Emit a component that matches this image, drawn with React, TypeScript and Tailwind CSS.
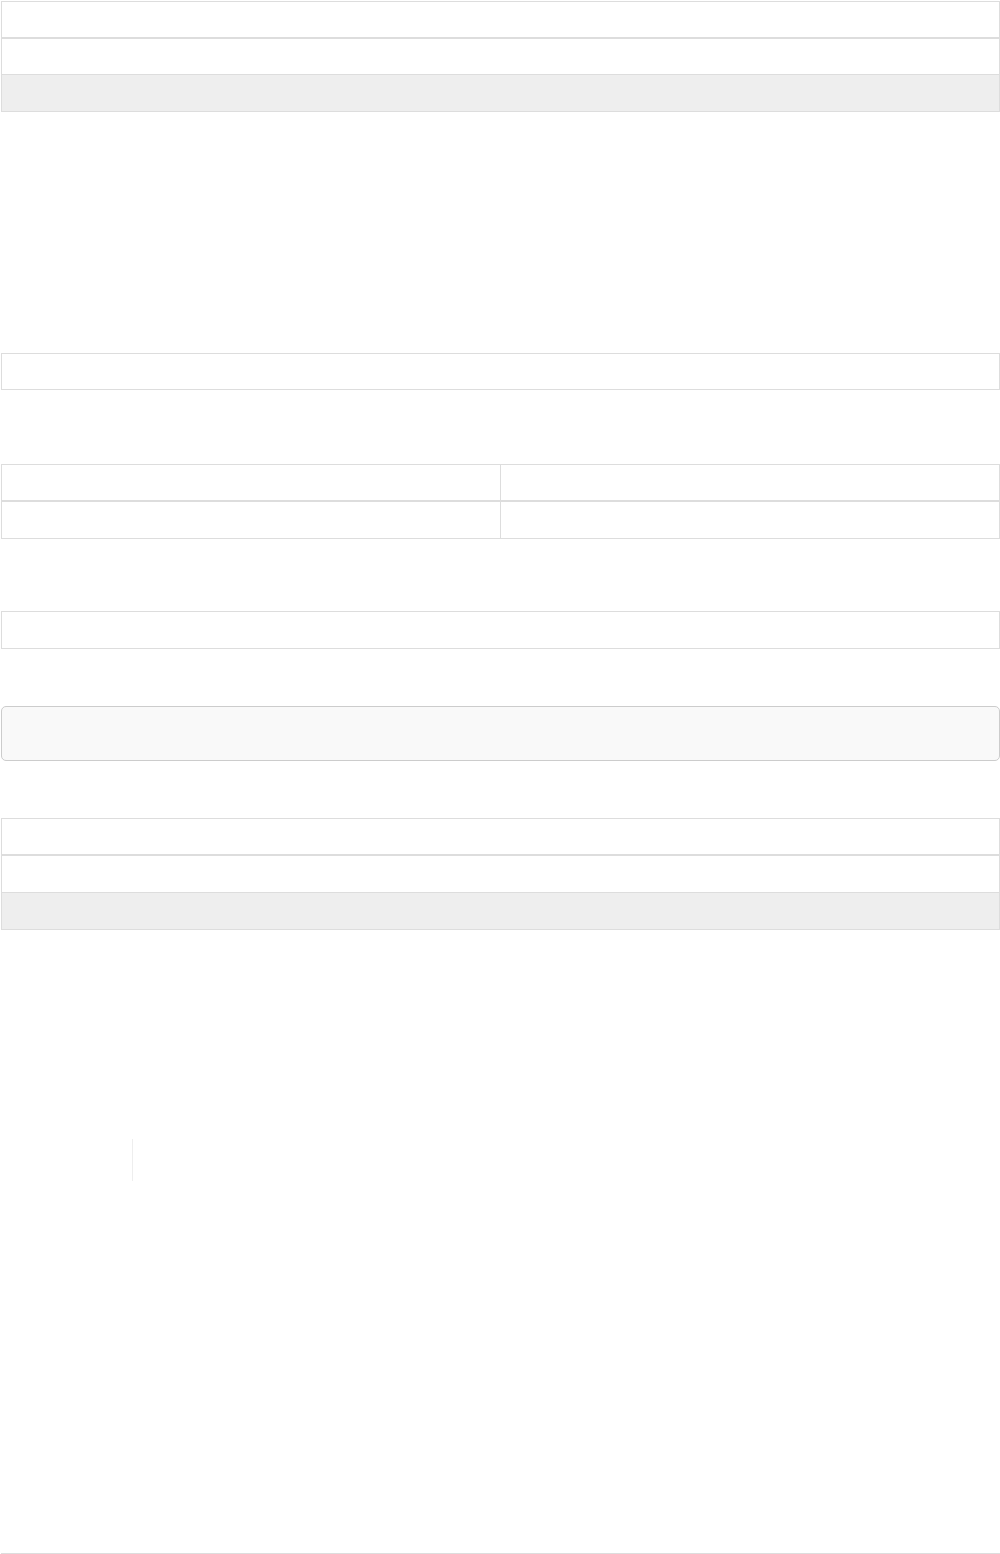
export default function App() {
  return (
    <div className="w-[1000px] h-[1554px] bg-white flex flex-col" style={{ fontFamily: '"Liberation Sans", Arial, sans-serif' }}>
      {/* Table 1 */}
      <div className="mt-[1px] ml-[1px] w-[999px] border border-[#dddddd] flex flex-col">
        <div className="h-[37px] border-b-2 border-[#dddddd]" />
        <div className="h-[36px] border-b border-[#dddddd]" />
        <div className="h-[36px] bg-[#eeeeee]" />
      </div>

      {/* Box 2 */}
      <div className="mt-[241px] ml-[1px] w-[999px] h-[37px] border border-[#dddddd]" />

      {/* Table 3 two columns */}
      <div className="mt-[74px] ml-[1px] w-[999px] border border-[#dddddd] flex flex-col">
        <div className="h-[37px] border-b-2 border-[#dddddd] grid grid-cols-[499px_1fr]">
          <div className="border-r border-[#dddddd]" />
          <div />
        </div>
        <div className="h-[36px] grid grid-cols-[499px_1fr]">
          <div className="border-r border-[#dddddd]" />
          <div />
        </div>
      </div>

      {/* Box 4 */}
      <div className="mt-[72px] ml-[1px] w-[999px] h-[38px] border border-[#dddddd]" />

      {/* Box 5 rounded */}
      <div className="mt-[57px] ml-[1px] w-[999px] h-[55px] border border-[#cccccc] rounded-[5px] bg-[#f9f9f9]" />

      {/* Table 6 */}
      <div className="mt-[57px] ml-[1px] w-[999px] border border-[#dddddd] flex flex-col">
        <div className="h-[37px] border-b-2 border-[#dddddd]" />
        <div className="h-[37px] border-b border-[#dddddd]" />
        <div className="h-[36px] bg-[#eeeeee]" />
      </div>

      {/* Vertical line */}
      <div className="mt-[209px] ml-[132px] w-[1px] h-[42px] bg-[#eeeeee]" />

      {/* Bottom line */}
      <div className="mt-[372px] ml-[1px] w-[999px] h-[1px] bg-[#dddddd]" />
    </div>
  );
}
